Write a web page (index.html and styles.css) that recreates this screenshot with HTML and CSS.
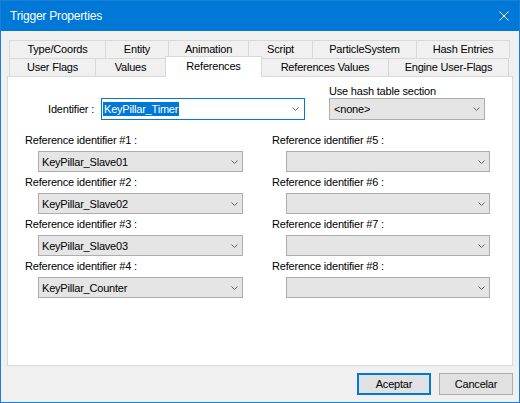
FILE: index.html
```html
<!DOCTYPE html>
<html>
<head>
    <title>Trigger Properties</title>
    <link rel="stylesheet" href="styles.css">
</head>
<body>
    <div class="window">
        <div class="titlebar">
            <span class="title">Trigger Properties</span>
            <svg class="close" width="10" height="10" viewBox="0 0 10 10">
                <path d="M0.5 0.5 L9.5 9.5 M9.5 0.5 L0.5 9.5" stroke="#fff" stroke-width="1" fill="none"/>
            </svg>
        </div>
        <div class="dialog">
            <div class="tabs">
                <div class="tab-row row-top">
                    <div class="tab">Type/Coords</div>
                    <div class="tab">Entity</div>
                    <div class="tab">Animation</div>
                    <div class="tab">Script</div>
                    <div class="tab">ParticleSystem</div>
                    <div class="tab">Hash Entries</div>
                </div>
                <div class="tab-row row-bottom">
                    <div class="tab">User Flags</div>
                    <div class="tab">Values</div>
                    <div class="tab selected">References</div>
                    <div class="tab">References Values</div>
                    <div class="tab">Engine User-Flags</div>
                </div>
            </div>
            <div class="panel">
                <div class="top-row">
                    <div class="id-label">Identifier :</div>
                    <div class="combo combo-edit id-combo">
                        <span class="sel">KeyPillar_Timer</span>
                        <svg class="arrow" width="7" height="4" viewBox="0 0 7 4"><path d="M0.5 0.5 L3.5 3.5 L6.5 0.5" stroke="#606060" fill="none"/></svg>
                    </div>
                    <div class="hash-group">
                        <div class="hash-label">Use hash table section</div>
                        <div class="combo hash-combo">
                            <span>&lt;none&gt;</span>
                            <svg class="arrow" width="7" height="4" viewBox="0 0 7 4"><path d="M0.5 0.5 L3.5 3.5 L6.5 0.5" stroke="#606060" fill="none"/></svg>
                        </div>
                    </div>
                </div>
                <div class="refs" id="refs"></div>
            </div>
            <div class="buttons">
                <button class="btn default">Aceptar</button>
                <button class="btn">Cancelar</button>
            </div>
        </div>
    </div>
    <script>
        const references = [
            'KeyPillar_Slave01', 'KeyPillar_Slave02', 'KeyPillar_Slave03', 'KeyPillar_Counter',
            '', '', '', ''
        ];

        function buildReferences() {
            const refs = document.getElementById('refs');
            const arrow = '<svg class="arrow" width="7" height="4" viewBox="0 0 7 4"><path d="M0.5 0.5 L3.5 3.5 L6.5 0.5" stroke="#606060" fill="none"/></svg>';
            let html = '';
            for (let col = 0; col < 2; col++) {
                html += `<div class="ref-col col-${col + 1}">`;
                for (let i = 0; i < 4; i++) {
                    const n = col * 4 + i;
                    html += `
                        <div class="ref">
                            <div class="ref-label">Reference identifier #${n + 1} :</div>
                            <div class="combo ref-combo"><span>${references[n]}</span>${arrow}</div>
                        </div>`;
                }
                html += '</div>';
            }
            refs.innerHTML = html;
        }

        buildReferences();
    </script>
</body>
</html>
```

FILE: styles.css
```css
body {
    margin: 0;
    font-family: 'Liberation Sans', Arial, sans-serif;
    font-size: 11px;
    letter-spacing: -0.2px;
    color: #000;
    background-color: #fff;
}
.window {
    width: 520px;
    height: 403px;
    box-sizing: border-box;
    border: 1px solid #1a7fd4;
    background-color: #f0f0f0;
}
.titlebar {
    height: 30px;
    background-color: #0078d7;
    color: #fff;
    display: flex;
    align-items: center;
    justify-content: space-between;
    padding: 0 10px 0 9px;
}
.title {
    font-size: 12px;
    padding-bottom: 1px;
}
.dialog {
    padding: 9px 6px 0 6px;
}
.tabs {
    margin: 0 2px;
}
.tab-row {
    display: flex;
    height: 18px;
}
.tab {
    box-sizing: border-box;
    height: 18px;
    border-top: 1px solid #d9d9d9;
    border-right: 1px solid #d9d9d9;
    text-align: center;
    line-height: 17px;
    white-space: nowrap;
}
.tab:first-child {
    border-left: 1px solid #d9d9d9;
}
.row-top .tab:nth-child(1) { width: 97px; }
.row-top .tab:nth-child(2) { width: 63px; }
.row-top .tab:nth-child(3) { width: 80px; }
.row-top .tab:nth-child(4) { width: 64px; }
.row-top .tab:nth-child(5) { width: 104px; }
.row-top .tab:nth-child(6) { width: 93px; }
.row-bottom .tab:nth-child(1) { width: 87px; }
.row-bottom .tab:nth-child(2) { width: 70px; }
.row-bottom .tab:nth-child(3) { width: 97px; }
.row-bottom .tab:nth-child(4) { width: 127px; }
.row-bottom .tab:nth-child(5) { width: 120px; }
.tab.selected {
    position: relative;
    z-index: 1;
    height: 21px;
    margin-top: -2px;
    margin-left: -1px;
    border-left: 1px solid #d9d9d9;
    background-color: #fff;
    line-height: 18px;
}
.panel {
    box-sizing: border-box;
    height: 290px;
    border: 1px solid #d9d9d9;
    background-color: #fff;
    padding: 8px 0 0 0;
}
.top-row {
    display: flex;
    align-items: flex-end;
}
.id-label {
    width: 86px;
    text-align: right;
    line-height: 22px;
}
.combo {
    box-sizing: border-box;
    display: flex;
    align-items: center;
    justify-content: space-between;
    height: 21px;
    padding: 0 4px 0 3px;
    background-color: #e5e5e5;
    border: 1px solid #adadad;
    white-space: nowrap;
}
.combo-edit {
    background-color: #fff;
    border-color: #0078d7;
}
.id-combo {
    width: 204px;
    height: 22px;
    margin-left: 7px;
    padding: 0 5px 0 1px;
}
.sel {
    background-color: #0078d7;
    color: #fff;
    line-height: 14px;
    padding: 0 1px;
}
.hash-group {
    margin-left: 24px;
}
.hash-label {
    line-height: 13px;
}
.hash-combo {
    width: 156px;
    height: 22px;
    padding-left: 4px;
}
.refs {
    display: grid;
    grid-template-columns: 247px 247px;
    padding-left: 17px;
    margin-top: 14px;
}
.ref {
    margin-bottom: 4px;
}
.ref-label {
    line-height: 13px;
}
.ref-combo {
    width: 205px;
    margin-top: 4px;
    margin-left: 13px;
}
.col-2 .ref-combo {
    width: 204px;
    margin-left: 14px;
}
.buttons {
    display: flex;
    justify-content: flex-end;
    gap: 8px;
    margin-top: 7px;
}
.btn {
    box-sizing: border-box;
    width: 74px;
    height: 22px;
    padding: 0;
    font-family: 'Liberation Sans', Arial, sans-serif;
    font-size: 11px;
    letter-spacing: -0.2px;
    color: #000;
    background-color: #e1e1e1;
    border: 1px solid #adadad;
}
.btn.default {
    border-color: #0078d7;
    box-shadow: inset 0 0 0 1px #0078d7;
}
```
